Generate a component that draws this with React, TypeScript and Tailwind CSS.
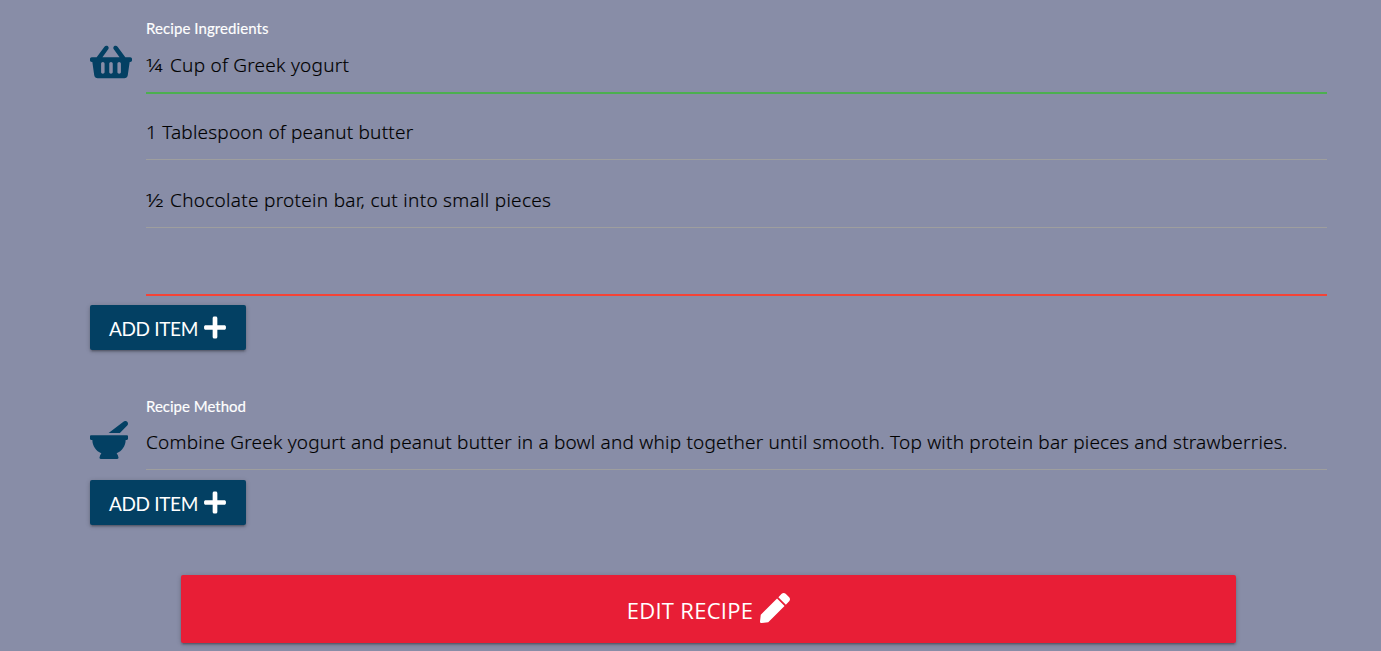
import type { ReactNode } from "react";
import { FaMortarPestle, FaPen, FaPlus, FaShoppingBasket } from "react-icons/fa";

function Field({ value, line, className }: { value: ReactNode; line: string; className: string }) {
  return (
    <div className={`flex w-[1181px] flex-col justify-between ${className}`}>
      <div className="flex h-7 whitespace-nowrap font-['Noto_Sans','Open_Sans',sans-serif] text-[19px] font-light leading-7 text-black [-webkit-text-stroke:0.15px_black]">
        {value}
      </div>
      <div className={line} />
    </div>
  );
}

function Fraction({ children }: { children: string }) {
  return (
    <span className="w-6">
      <span className="inline-block origin-left scale-x-[1.2]">{children}</span>
    </span>
  );
}

function Label({ children, tracking }: { children: string; tracking: string }) {
  return (
    <div className="h-5 whitespace-nowrap text-[15px] leading-5 text-white">
      <span className={`[-webkit-text-stroke:0.15px_white] ${tracking}`}>{children}</span>
    </div>
  );
}

function AddItem() {
  return (
    <button className="flex h-[45px] w-[156px] items-center rounded-[2px] bg-[#034063] pl-[19px] text-[19px] leading-6 text-white shadow-[0_2px_2px_0_rgba(0,0,0,0.14),0_3px_1px_-2px_rgba(0,0,0,0.12),0_1px_5px_0_rgba(0,0,0,0.2)]">
      <span className="w-[95px] whitespace-nowrap pt-[3px] text-left tracking-[-0.35px]">ADD ITEM</span>
      <FaPlus className="mb-px h-[25px] w-[22px]" />
    </button>
  );
}

const plain = "h-px bg-[#9e9e9e]";

export default function App() {
  return (
    <main className="h-[651px] w-[1381px] overflow-hidden bg-[#888da7] pl-[90px] pt-[18px] font-[Lato,sans-serif]">
      <section className="flex h-[278px]">
        <div className="w-14 pt-[25px]">
          <FaShoppingBasket className="h-[38px] w-[42px] text-[#034063]" />
        </div>
        <div>
          <Label tracking="tracking-[0.08px]">Recipe Ingredients</Label>
          <Field value={<><Fraction>¼</Fraction><span className="tracking-[0.25px]">Cup of Greek yogurt</span></>} line="h-0.5 bg-[#4caf50]" className="mt-[13px] h-[43px]" />
          <Field value={<span className="tracking-[0.2px]">1 Tablespoon of peanut butter</span>} line={plain} className="mt-6 h-[42px]" />
          <Field value={<><Fraction>½</Fraction><span className="tracking-[0.29px]">Chocolate protein bar, cut into small pieces</span></>} line={plain} className="mt-[26px] h-[42px]" />
          <Field value="" line="h-0.5 bg-[#f44336]" className="mt-6 h-11" />
        </div>
      </section>
      <div className="pt-[9px]"><AddItem /></div>
      <section className="mt-[46px] flex h-[74px]">
        <div className="w-14 pt-[25px]">
          <FaMortarPestle className="size-[38px] text-[#034063]" />
        </div>
        <div>
          <Label tracking="tracking-[0px]">Recipe Method</Label>
          <Field value={<span className="tracking-[0.21px]">Combine Greek yogurt and peanut butter in a bowl and whip together until smooth. Top with protein bar pieces and strawberries.</span>} line={plain} className="mt-3 h-[42px]" />
        </div>
      </section>
      <div className="pt-[10px]"><AddItem /></div>
      <button className="ml-[91px] mt-[50px] flex h-[68px] w-[1055px] items-center justify-center gap-[7px] rounded-[2px] bg-[#e81e36] font-['Open_Sans','Noto_Sans',sans-serif] text-[22px] text-white shadow-[0_2px_2px_0_rgba(0,0,0,0.14),0_3px_1px_-2px_rgba(0,0,0,0.12),0_1px_5px_0_rgba(0,0,0,0.2)]">
        <span className="pt-0.5 tracking-[0.3px]">EDIT RECIPE</span>
        <FaPen className="mb-[2px] size-[30px]" />
      </button>
    </main>
  );
}
